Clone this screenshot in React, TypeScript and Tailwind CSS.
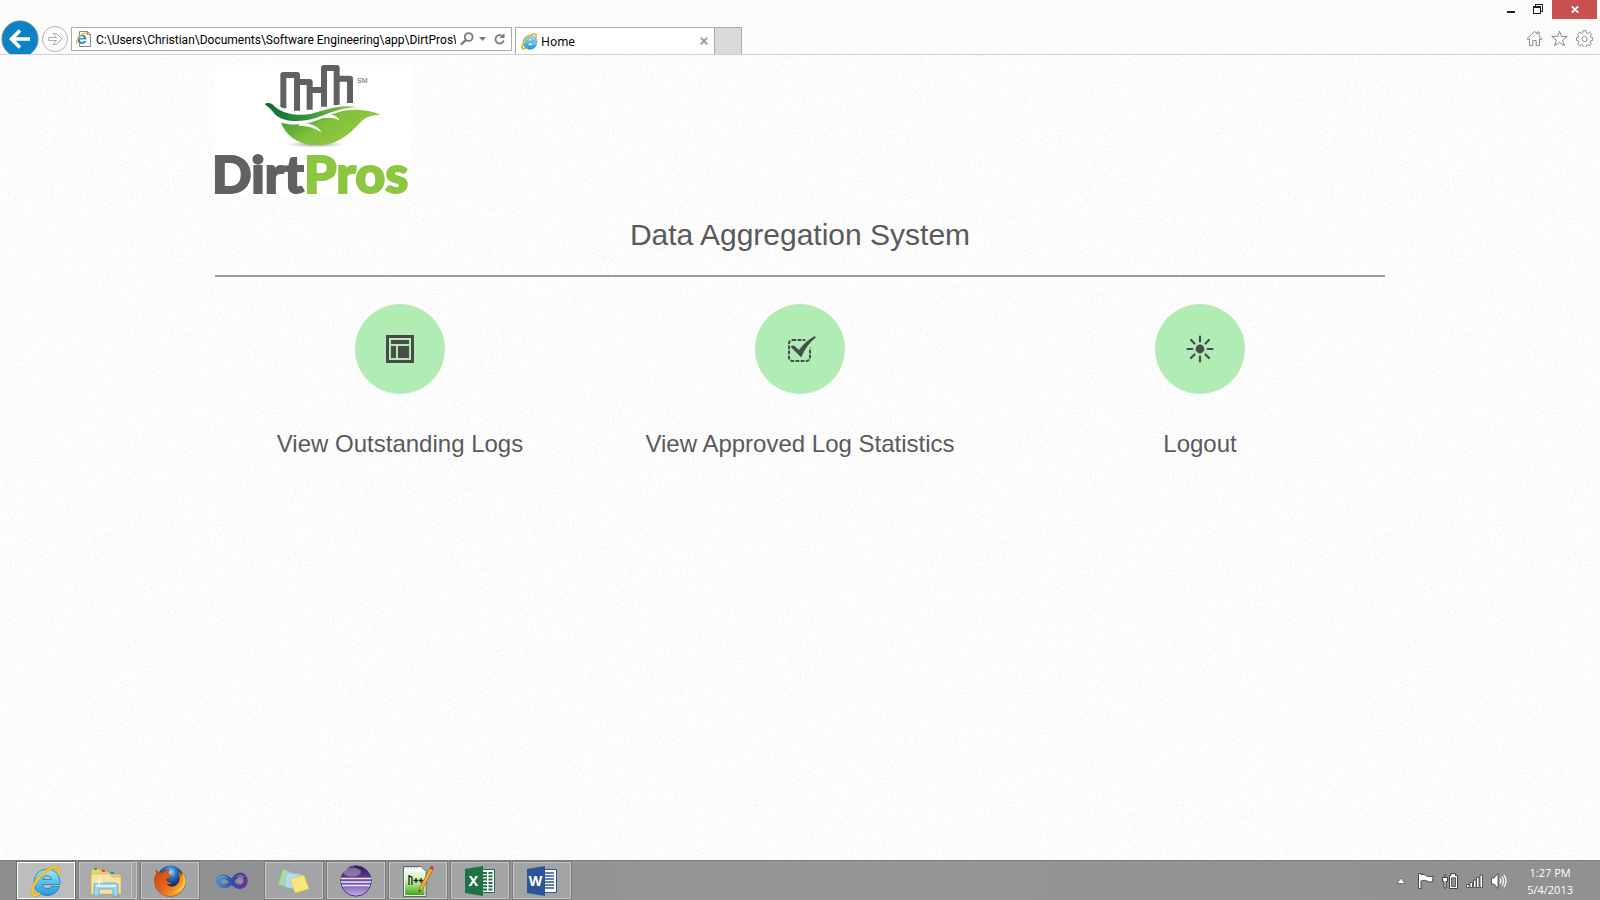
import React from "react";

function IELogo({ className }: { className: string }) {
  return (
    <svg viewBox="0 0 32 32" className={className} aria-hidden="true">
      <defs>
        <linearGradient id="ieBlue" x1="0" y1="0" x2="0" y2="1">
          <stop offset="0" stopColor="#a5e8fc" />
          <stop offset="0.5" stopColor="#55c3ee" />
          <stop offset="1" stopColor="#2b95da" />
        </linearGradient>
      </defs>
      <path
        d="M30 19.500H12.600c.3 2.500 2.200 4.200 4.800 4.200 1.800 0 3.200-.8 4-2.200h8C27.800 27 23.200 30.500 17.200 30.500 9.600 30.500 4 25.200 4 17.700 4 10 9.600 4.200 17.200 4.200 25 4.200 30.600 10 30 19.500zM21.600 14.500c-.4-2.300-2.100-3.700-4.400-3.700-2.400 0-4 1.400-4.500 3.700z"
        fill="url(#ieBlue)"
        stroke="#1a78b8"
        strokeWidth="0.8"
      />
      <path
        d="M28.600 8.500c.9-3.300.4-5.700-1.900-6.300C22.600 1.100 13.700 6.300 7.600 14.300 2.500 21 .4 28 3.300 29.800c1.400.9 3.400.3 5.600-1.100"
        fill="none"
        stroke="#c88f0a"
        strokeWidth="2.800"
        strokeLinecap="round"
      />
      <path
        d="M28.600 8.500c.9-3.300.4-5.700-1.900-6.300C22.600 1.100 13.700 6.300 7.600 14.300 2.500 21 .4 28 3.300 29.800c1.400.9 3.400.3 5.600-1.100"
        fill="none"
        stroke="#fccb2c"
        strokeWidth="2"
        strokeLinecap="round"
      />
    </svg>
  );
}

function PageIcon() {
  return (
    <svg viewBox="0 0 16 16" className="h-4 w-4 shrink-0" aria-hidden="true">
      <path d="M3.500.5h8l3 3v12h-11z" fill="#fff" stroke="#8a8a8a" />
      <path d="M11.500.5v3h3" fill="none" stroke="#8a8a8a" />
      <path
        d="M10.300 8.600H3.600c.1 1.500 1 2.400 2.300 2.400.9 0 1.500-.4 1.900-1h2.400c-.7 1.900-2.200 3-4.300 3C3.200 13 1.300 11.200 1.300 8.300s2-4.800 4.600-4.800c2.900 0 4.600 2 4.400 5.100zM7.900 7c-.2-1.100-.9-1.700-2-1.700s-1.800.6-2.100 1.700z"
        fill="#2a8fd0"
      />
      <path d="M10.600 4c.3-1.300 0-2-.9-2C7.500 2 3.800 4.300 1.800 7.700.5 10 .1 12.400 1.200 13" fill="none" stroke="#f4c51c" strokeWidth="1.300" />
    </svg>
  );
}

function Browser() {
  return (
    <header className="border-b border-[#d0d0d0] bg-[#fbfbfb]">
      <div className="flex h-[19px] justify-end pr-[3px]">
        <button aria-label="Minimize" className="flex w-[26px] justify-center pt-[11px]">
          <span className="h-[2px] w-2 bg-[#222]" />
        </button>
        <button aria-label="Restore" className="flex w-7 justify-center pt-1">
          <svg viewBox="0 0 10 10" className="h-[10px] w-[10px]" shapeRendering="crispEdges" aria-hidden="true">
            <path d="M2.500 2V.5h7v7H8" fill="none" stroke="#222" />
            <path d="M0 2h8v8H0zM1 4v5h6V4z" fill="#222" fillRule="evenodd" />
          </svg>
        </button>
        <button aria-label="Close" className="flex w-[45px] items-center justify-center bg-[#c75050]">
          <svg viewBox="0 0 8 7" className="h-[7px] w-2" aria-hidden="true">
            <path d="M.8.300 7.200 6.700M7.200.300.8 6.700" stroke="#fff" strokeWidth="1.700" />
          </svg>
        </button>
      </div>
      <div className="flex h-[35px]">
        <button aria-label="Back" className="w-10 shrink-0 overflow-hidden">
          <svg viewBox="0 0 40 35" className="h-[35px] w-10" aria-hidden="true">
            <circle cx="20" cy="20" r="18" fill="#0a84c6" stroke="#5f7f93" />
            <path d="M30 20H12M20 11.500 11.500 20 20 28.500" fill="none" stroke="#fff" strokeWidth="3.600" />
          </svg>
        </button>
        <button aria-label="Forward" className="w-[31px] shrink-0">
          <svg viewBox="0 0 31 35" className="h-[35px] w-[31px]" aria-hidden="true">
            <circle cx="15" cy="20" r="12.500" fill="#fcfcfc" stroke="#b5b5b5" />
            <path d="M8.500 18.500h8l-3.500-4h3.500l5.500 5.500-5.500 5.500H13l3.500-4h-8z" fill="none" stroke="#adadad" />
          </svg>
        </button>
        <div className="mt-2 flex h-6 w-[441px] items-center border border-[#ababab] bg-white pl-1 pr-[5px]">
          <PageIcon />
          <input
            aria-label="Address"
            readOnly
            defaultValue="C:\Users\Christian\Documents\Software Engineering\app\DirtProsWebsite\home.html"
            className="ml-1 min-w-0 flex-1 bg-transparent pt-px font-[Roboto,sans-serif] text-[12px] leading-5 text-black outline-none"
          />
          <button aria-label="Search" className="ml-1">
            <svg viewBox="0 0 14 14" className="h-[14px] w-[14px]" aria-hidden="true">
              <circle cx="8.700" cy="5" r="3.900" fill="none" stroke="#7a7a7a" strokeWidth="1.800" />
              <path d="M6 7.900.9 12.600" stroke="#7a7a7a" strokeWidth="2.200" />
            </svg>
          </button>
          <button aria-label="Show address history" className="ml-[5px] w-[7px]">
            <svg viewBox="0 0 7 4" className="h-1 w-[7px]" aria-hidden="true">
              <path d="M0 0h7L3.500 4z" fill="#7a7a7a" />
            </svg>
          </button>
          <button aria-label="Refresh" className="ml-2">
            <svg viewBox="0 0 12 14" className="h-[14px] w-3" aria-hidden="true">
              <path d="M8.300 4A4.200 4.200 0 1 0 9.700 8.500" fill="none" stroke="#7a7a7a" strokeWidth="1.800" />
              <path d="M10.500 1v5h-5z" fill="#7a7a7a" />
            </svg>
          </button>
        </div>
        <div className="ml-[3px] mt-2 flex w-[200px] items-center border-x border-t border-[#ababab] bg-white pl-[5px] pr-[6px]">
          <IELogo className="h-[17px] w-[17px]" />
          <span className="ml-[3px] flex-1 pt-[2px] font-['Noto_Sans','Open_Sans',sans-serif] text-[12px] leading-5 text-black">Home</span>
          <button aria-label="Close tab">
            <svg viewBox="0 0 8 8" className="h-2 w-2" aria-hidden="true">
              <path d="M.8.800 7.200 7.200M7.200.800.8 7.200" stroke="#a0a0a0" strokeWidth="2" />
            </svg>
          </button>
        </div>
        <button aria-label="New tab" className="mt-2 w-[27px] border-r border-t border-[#ababab] bg-[#dadada]" />
        <div className="ml-auto flex items-center gap-2 pr-[7px] pt-[3px]">
          <button aria-label="Home">
            <svg viewBox="0 0 17 17" className="h-[17px] w-[17px]" aria-hidden="true">
              <path
                d="M1 8.900 8.500 1.300l2.700 2.700V2h2v4L16 8.900l-1 1-1.500-1.300v7h-3.300v-5H6.800v5H3.500v-7L2 9.900z"
                fill="#fff"
                stroke="#8c8c8c"
              />
            </svg>
          </button>
          <button aria-label="Favorites">
            <svg viewBox="0 0 17 17" className="h-[17px] w-[17px]" aria-hidden="true">
              <path d="M8.500 1l2 5.500h5.800l-4.700 3.600 1.800 5.700-4.900-3.500-4.900 3.500 1.800-5.700L.7 6.500h5.800z" fill="#fff" stroke="#8c8c8c" />
            </svg>
          </button>
          <button aria-label="Tools">
            <svg viewBox="0 0 17 17" className="h-[17px] w-[17px]" aria-hidden="true">
              <path
                d="M7 .7h3l.4 2.200 1.100.5 1.900-1.300 2.100 2.100-1.300 1.900.4 1.100 2.100.4v2.800l-2.200.4-.4 1.100 1.300 1.900-2 2.100-1.900-1.300-1.100.5-.4 2.200H7l-.4-2.200-1.100-.5-1.900 1.300-2-2.100 1.300-1.900-.5-1.100-2-.4V7.600l2.100-.4.4-1.100-1.300-1.900 2-2.100 1.900 1.300 1.100-.5z"
                fill="#fff"
                stroke="#8c8c8c"
              />
              <circle cx="8.500" cy="9" r="2.600" fill="#fff" stroke="#8c8c8c" />
            </svg>
          </button>
        </div>
      </div>
    </header>
  );
}

function DirtProsLogo() {
  return (
    <svg viewBox="0 0 196 130" className="h-[130px] w-[196px] overflow-visible" role="img" aria-label="DirtPros">
      <defs>
        <linearGradient id="leaf" x1="0" y1="0" x2="1" y2="0.600">
          <stop offset="0" stopColor="#2b8a3a" />
          <stop offset="0.500" stopColor="#7fc03c" />
          <stop offset="1" stopColor="#97cc3f" />
        </linearGradient>
        <linearGradient id="rib" x1="0" y1="0" x2="1" y2="0">
          <stop offset="0" stopColor="#0a6a33" />
          <stop offset="0.400" stopColor="#2b8f3c" />
          <stop offset="1" stopColor="#9ccb45" />
        </linearGradient>
        <radialGradient id="shade">
          <stop offset="0" stopColor="#777" stopOpacity="0.800" />
          <stop offset="1" stopColor="#999" stopOpacity="0" />
        </radialGradient>
      </defs>
      <rect width="196" height="130" fill="#fff" />
      <g transform="translate(-15 -9) scale(.33333)">
        <ellipse cx="347" cy="265" rx="88" ry="10" fill="url(#shade)" />
        <g fill="none" stroke="#606163" strokeWidth="18" strokeLinejoin="round">
          <path d="M250 157V57h41v107" />
          <path d="M291 78h38v83" />
          <path d="M329 102h43" />
          <path d="M372 152V36h38v112" />
          <path d="M410 68h40v74" />
        </g>
        <path d="M236 150C290 182 350 165 400 150 430 142 452 140 470 140V165H236z" fill="#fff" />
        <path
          d="M194 144C200 139 212 140 219 146 240 172 290 182 335 173 375 164 410 145 472 153 420 155 385 173 345 187 300 200 250 198 226 176 215 162 207 154 194 144Z"
          fill="url(#rib)"
        />
        <path
          d="M243 200C290 212 330 203 367 187 410 168 440 159 480 162 510 164 528 170 542 177 510 177 495 185 480 200 450 232 420 262 365 267 300 270 262 245 243 200Z"
          fill="url(#leaf)"
        />
        <path d="M300 201C328 200 352 208 366 230 345 215 325 210 296 209Z" fill="#fff" />
        <path d="M372 178C392 172 412 178 419 194 402 184 392 184 368 187Z" fill="#fff" />
      </g>
      <text x="142" y="18" fontFamily="Liberation Sans, sans-serif" fontSize="7" fill="#606163">SM</text>
      <text
        x="-3"
        y="128"
        fontFamily="Lato, sans-serif"
        fontWeight="900"
        fontSize="52"
        fill="#606163"
        stroke="#606163"
        strokeWidth="2"
      >
        Dirt<tspan fill="#8dc63f" stroke="#8dc63f">Pros</tspan>
      </text>
    </svg>
  );
}

const layoutIcon = (
  <svg viewBox="0 0 28 28" className="h-7 w-7" shapeRendering="crispEdges" fill="#4a4a4a" aria-hidden="true">
    <path fillRule="evenodd" d="M0 0h28v28H0zM3 3v22h22V3z" />
    <path d="M5 5h18v4H5zM5 11h5v12H5zM12 11h11v12H12z" />
  </svg>
);

const checkIcon = (
  <svg viewBox="0 0 28 28" className="h-7 w-7 overflow-visible" aria-hidden="true">
    <rect x="3" y="5" width="21" height="21" rx="3.500" fill="none" stroke="#4a4a4a" strokeWidth="2" strokeDasharray="3.800 1.300" />
    <path d="M19 3h9v7l-7 5z" fill="#b1ecb5" />
    <path d="M4.800 12c1-1.900 2.700-1.900 4-.7l4.200 3.700C17 9.500 22 4.500 28.800 1l1 1.500C23.500 7.500 18.500 14 15.200 22.500z" fill="#4a4a4a" />
  </svg>
);

const sunIcon = (
  <svg viewBox="0 0 28 28" className="h-7 w-7" stroke="#4a4a4a" strokeWidth="2.200" strokeLinecap="round" aria-hidden="true">
    <circle cx="14" cy="14" r="4.400" fill="#4a4a4a" stroke="none" />
    <path d="M14 1.500v5M14 21.500v5M1.500 14h5M21.500 14h5M5 5l3.500 3.500M19.500 19.500 23 23M5 23l3.500-3.500M19.500 8.500 23 5" />
  </svg>
);

const actions = [
  { label: "View Outstanding Logs", icon: layoutIcon },
  { label: "View Approved Log Statistics", icon: checkIcon },
  { label: "Logout", icon: sunIcon },
];

function Home() {
  return (
    <main className="relative flex-1 bg-[#fefefe]">
      <svg className="absolute inset-0 h-full w-full" aria-hidden="true">
        <filter id="grain">
          <feTurbulence type="fractalNoise" baseFrequency="0.600" numOctaves="2" seed="4" />
          <feColorMatrix values="0 0 0 0 0.500  0 0 0 0 0.500  0 0 0 0 0.500  0.500 0 0 0 -0.240" />
        </filter>
        <rect width="100%" height="100%" filter="url(#grain)" />
      </svg>
      <div className="relative mx-auto max-w-[1170px] pt-[10px] font-['Liberation_Sans',Arial,sans-serif] text-[#5a5a5a]">
        <DirtProsLogo />
        <h1 className="pt-5 text-center text-[30px] leading-10">Data Aggregation System</h1>
        <hr className="mt-5 border-t-2 border-[#9b9d9b]" />
        <nav className="mt-[27px] grid grid-cols-3 gap-[30px]">
          {actions.map((a) => (
            <a key={a.label} href="#" className="flex flex-col items-center gap-[30px]">
              <span className="flex h-[90px] w-[90px] items-center justify-center rounded-full bg-[#b1ecb5]">{a.icon}</span>
              <span className="text-[24px] leading-10">{a.label}</span>
            </a>
          ))}
        </nav>
      </div>
    </main>
  );
}

const folderIcon = (
  <svg viewBox="0 0 32 32" className="h-8 w-8" aria-hidden="true">
    <path d="M1 8V5l1-2h7l1 2h6l1 2h6l1 2h7v19H1z" fill="#e8cf7c" stroke="#b89b45" strokeWidth="0.700" />
    <path d="M4 3h3v2H4z" fill="#22b04a" />
    <path d="M12 5h3v2h-3z" fill="#d8442c" />
    <path d="M20 7h4v2h-4z" fill="#2f86d8" />
    <path d="M1 9h20l1 3h9v17H1z" fill="#f5e3a0" stroke="#cdb262" strokeWidth="0.600" />
    <path d="M4 31V20q0-2 2-2h20q2 0 2 2v11h-5v-7H9v7z" fill="#9fd3ee" stroke="#5fa6cc" strokeWidth="0.800" />
    <path d="M6 20h20v2H6z" fill="#d8f0fb" />
    <path d="M9 13v8M5 17h8" stroke="#fff" strokeWidth="1" />
  </svg>
);

const firefoxIcon = (
  <svg viewBox="0 0 32 32" className="h-8 w-8" aria-hidden="true">
    <defs>
      <radialGradient id="globe" cx="0.500" cy="0.250">
        <stop offset="0" stopColor="#a8dcf6" />
        <stop offset="0.450" stopColor="#2a78c0" />
        <stop offset="1" stopColor="#0f2f6b" />
      </radialGradient>
      <linearGradient id="fox" x1="0" y1="0" x2="1" y2="0.600">
        <stop offset="0" stopColor="#c84310" />
        <stop offset="0.500" stopColor="#e5641a" />
        <stop offset="1" stopColor="#f9b233" />
      </linearGradient>
    </defs>
    <circle cx="16.500" cy="13.500" r="13" fill="url(#globe)" />
    <path
      d="M2 5c0 1 .3 2 .8 3C1 11 .4 14 .6 17 1.300 25.500 8 31.500 16.200 31.500S31.500 25 31.500 16.500c0-4-1.500-8-4.500-10.500.7 1.500 1 3 .9 4.500-1-2-2.200-3.500-4-4.500 2 4 2.500 9-.2 12.500-2.500 3.500-8.500 4-11.200.5 2 .6 4 .2 5.500-1.500-2 .2-3.800-.2-4.800-1.500-1-1.300-.6-3 .8-3.200 1.300-.2 2.500.2 3.500 0 .2-2-2-3-3.500-3.500C14 7 14 6 15.500 5 13 5 11 5.500 9.500 7.500 8 7 6.500 7 5 7.500 3.500 6.800 2.500 6 2 5z"
      fill="url(#fox)"
      stroke="#8f2e0a"
      strokeWidth="0.500"
    />
    <path d="M27 6c3 4 3 9 1 14-2 4-5 6-9 7 5 1 10-2 12-7 1.500-5 0-10-4-14z" fill="#fbd24a" opacity="0.800" />
  </svg>
);

const infinityIcon = (
  <svg viewBox="0 0 32 18" className="h-[18px] w-8" aria-hidden="true">
    <defs>
      <linearGradient id="vs" x1="0" y1="0" x2="1" y2="0">
        <stop offset="0" stopColor="#3c8fd0" />
        <stop offset="0.500" stopColor="#2e4fa8" />
        <stop offset="1" stopColor="#6b2fa0" />
      </linearGradient>
    </defs>
    <path
      d="M16 9.500C13 13.500 11 14 8 14c-3.300 0-5.500-2-5.500-4.700S4.700 4.800 7.500 4.800c4.500 0 7 4 10 7 2 2 3.500 3 6 3 3.500 0 6-2.500 6-6s-2.500-6-5.700-6C20.500 2.800 18.500 6 16 9.500z"
      fill="none"
      stroke="url(#vs)"
      strokeWidth="4.400"
    />
    <path d="M3 7.500C5 4 8.500 4 11 6M21 5c2-2 5-1.500 7 .5" fill="none" stroke="#8fc4ea" strokeWidth="1" opacity="0.800" />
  </svg>
);

const notesIcon = (
  <svg viewBox="0 0 32 32" className="h-8 w-8" aria-hidden="true">
    <path d="m5 4 13 5-5 14L0 20z" fill="#a9dca0" stroke="#82be7b" strokeWidth="0.500" />
    <path d="m8 8 15 1-1 16-15-3z" fill="#b5daf3" stroke="#85b5d8" strokeWidth="0.500" />
    <path d="m12 14 14-4 5 14-14 4z" fill="#fbe67c" stroke="#d8b93f" strokeWidth="0.500" />
  </svg>
);

const eclipseIcon = (
  <svg viewBox="0 0 32 32" className="h-8 w-8" aria-hidden="true">
    <defs>
      <linearGradient id="ecl" x1="0" y1="0" x2="0" y2="1">
        <stop offset="0" stopColor="#2c1650" />
        <stop offset="0.380" stopColor="#5c3c92" />
        <stop offset="0.600" stopColor="#7a5cae" />
        <stop offset="1" stopColor="#c6b2e4" />
      </linearGradient>
    </defs>
    <circle cx="16" cy="16" r="15.200" fill="url(#ecl)" stroke="#4f3285" strokeWidth="1" />
    <ellipse cx="12" cy="7" rx="9" ry="4.500" fill="#fff" opacity="0.350" />
    <path d="M1 13.500h30M1 17h30M2 20.500h28" stroke="#efe6fa" strokeWidth="1.300" />
  </svg>
);

const notepadIcon = (
  <svg viewBox="0 0 32 32" className="h-8 w-8" aria-hidden="true">
    <defs>
      <linearGradient id="npp" x1="0" y1="0" x2="0" y2="1">
        <stop offset="0" stopColor="#f2fff0" />
        <stop offset="0.450" stopColor="#c8f0a8" />
        <stop offset="1" stopColor="#3fa816" />
      </linearGradient>
    </defs>
    <path d="M1.500 1.500H19l5 5v25H1.500z" fill="#fff" stroke="#5b6b5b" />
    <path d="M3 5h16l3.500 3v22H3z" fill="url(#npp)" />
    <path d="M3 1v2.500M6 1v2.500M9 1v2.500M12 1v2.500M15 1v2.500" stroke="#777" strokeWidth="0.800" />
    <path d="M7 20V10M7 11.500h1.500q1.500 0 1.500 1.500v7M11.500 15.500h5M14 13v5M17 15.500h4M19 13v5" fill="none" stroke="#222" strokeWidth="1.300" />
    <path d="m17 27 1.200-5L28 3l3 1.500L20.500 24z" fill="#f4b32f" stroke="#9b6614" strokeWidth="0.700" />
    <path d="m27.500 3.500 1.500-3 3 1.500-1.500 3z" fill="#c9453f" />
    <path d="m17 27 .6-2.400 1.500.8z" fill="#333" />
  </svg>
);

function OfficeIcon({ letter, kind }: { letter: string; kind: "excel" | "word" }) {
  const color = kind === "excel" ? "#1f7246" : "#2a5699";
  return (
    <svg viewBox="0 0 32 32" className="h-8 w-8" aria-hidden="true">
      <path d="M17 4.500h13.500v23H17z" fill="#fff" stroke={color} />
      {kind === "excel" ? (
        <path d="M19 8h4M24.500 8h4M19 11.300h4M24.500 11.300h4M19 14.600h4M24.500 14.600h4M19 17.900h4M24.500 17.900h4M19 21.200h4M24.500 21.200h4M19 24.500h4M24.500 24.500h4" stroke={color} strokeWidth="2" />
      ) : (
        <path d="M19 8h9M19 11h9M19 14h9M19 17h9M19 20h9M19 23h9" stroke={color} strokeWidth="1.300" />
      )}
      <path d="M1 4 19 1v30L1 28z" fill={color} />
      <text x="9.500" y="21" textAnchor="middle" fontFamily="Open Sans, sans-serif" fontWeight="700" fontSize="14" fill="#fff">
        {letter}
      </text>
    </svg>
  );
}

const apps = [
  { name: "Internet Explorer", look: "active", icon: <IELogo className="h-8 w-8" /> },
  { name: "File Explorer", look: "stack", icon: folderIcon },
  { name: "Firefox", look: "open", icon: firefoxIcon },
  { name: "Visual Studio", look: "idle", icon: infinityIcon },
  { name: "Sticky Notes", look: "open", icon: notesIcon },
  { name: "Eclipse", look: "open", icon: eclipseIcon },
  { name: "Notepad++", look: "open", icon: notepadIcon },
  { name: "Excel", look: "open", icon: <OfficeIcon letter="X" kind="excel" /> },
  { name: "Word", look: "open", icon: <OfficeIcon letter="W" kind="word" /> },
];

const looks: Record<string, string> = {
  active: "outline-[#6c6d6f] border border-white bg-[#bcbdbf]",
  open: "outline-[#7a7b7d] border border-[#c3c4c5] bg-[#a3a4a6]",
  stack: "outline-[#7a7b7d] border border-[#c3c4c5] bg-[#a9aaac]",
  idle: "outline-transparent",
};

function Taskbar() {
  return (
    <footer className="flex h-10 border-t border-[#7d7e80] bg-linear-to-r from-[#8d8e90] via-[#959698] to-[#8f9092] px-4">
      <div className="flex gap-[2px]">
        {apps.map((app) => (
          <button key={app.name} aria-label={app.name} className="flex w-[60px] p-px">
            <span className={`flex h-full flex-1 items-center justify-center outline-1 ${looks[app.look]}`}>{app.icon}</span>
            {app.look === "stack" && <span className="h-full w-[5px] border border-l-0 border-[#c3c4c5] bg-[#a3a4a6]" />}
          </button>
        ))}
      </div>
      <div className="ml-auto flex items-center gap-2 pr-[11px]">
        <button aria-label="Show hidden icons" className="mr-1">
          <svg viewBox="0 0 10 8" className="h-2 w-[10px]" aria-hidden="true">
            <path d="M5 1 9 6.500H1z" fill="#fff" stroke="#5e5f61" strokeWidth="0.800" />
          </svg>
        </button>
        <button aria-label="Action Center">
          <svg viewBox="0 0 16 16" className="h-4 w-4" aria-hidden="true">
            <path d="M.5.500h2.500v1.300c3-1 4.500.2 5.700 1.200 1.800 1 3.500.3 6.800.5-1 1.800-1 3.600-.5 5-2.500.8-4.500.5-6-.5-2-1-3.500-.8-6 0v7.500H.5z" fill="#fff" stroke="#48494b" strokeWidth="1" />
          </svg>
        </button>
        <button aria-label="Battery">
          <svg viewBox="0 0 16 16" className="h-4 w-4" aria-hidden="true">
            <path d="M7.500 2.500h1.500v-2h4.500v2h2v13h-8z" fill="#fff" stroke="#3e3f41" />
            <path d="M9.500 4.800h4v8.700h-4z" fill="#8f9092" stroke="#3e3f41" strokeWidth="0.800" />
            <path d="M.5 4.500H2v-3M5.500 4.500H4v-3M.5 4.500h5v4H4v6.500H2V8.500H.5z" fill="#fff" stroke="#3e3f41" strokeWidth="1" />
          </svg>
        </button>
        <button aria-label="Network">
          <svg viewBox="0 0 17 14" className="h-[14px] w-[17px]" aria-hidden="true">
            <path d="M.5 10.500h2.500v3H.5zM4 8.500h2.500v5H4zM7.500 6h2.500v7.500H7.500zM10.500 3.500H13v10h-2.500zM14 1h2.500v12.500H14z" fill="#fff" stroke="#48494b" strokeWidth="0.900" />
          </svg>
        </button>
        <button aria-label="Volume">
          <svg viewBox="0 0 16 16" className="h-4 w-4" aria-hidden="true">
            <path d="M.5 5h2.500l4-4.500v15L3 11H.5z" fill="#fff" stroke="#48494b" strokeWidth="0.900" />
            <path d="M9 5.500q1.800 2.500 0 5M11 3.500q3 4.500 0 9M13 1.800q4 6.200 0 12.400" fill="none" stroke="#fff" strokeWidth="1.200" />
          </svg>
        </button>
        <time className="ml-3 block pt-px text-center font-['Open_Sans','Noto_Sans',sans-serif] text-[11px] leading-[17px] text-white">
          1:27 PM
          <br />
          5/4/2013
        </time>
      </div>
    </footer>
  );
}

export default function App() {
  return (
    <div className="flex min-h-screen flex-col">
      <Browser />
      <Home />
      <Taskbar />
    </div>
  );
}
